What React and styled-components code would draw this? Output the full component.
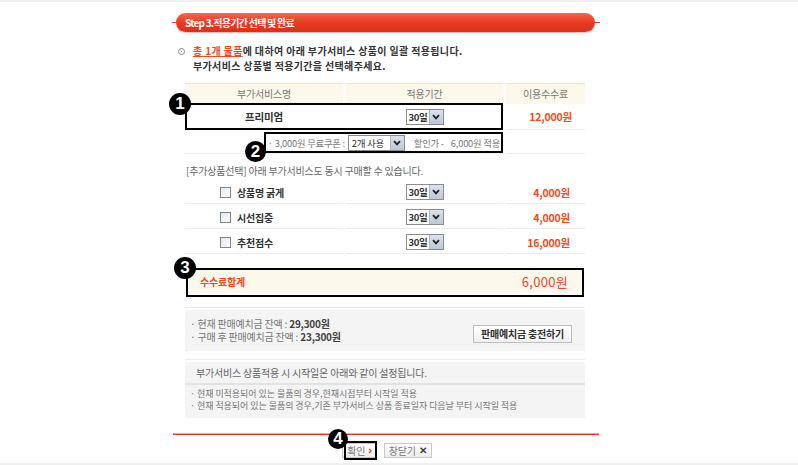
import React from "react";
import styled, { createGlobalStyle } from "styled-components";

const Global = createGlobalStyle`
  html, body { margin: 0; padding: 0; background: #fff; }
  body {
    font-family: "Noto Sans CJK KR", "Noto Sans", sans-serif;
    font-size: 10px;
    letter-spacing: -0.2px;
    color: #666;
  }
`;

const Page = styled.div`
  width: 798px;
  height: 465px;
  box-sizing: border-box;
  border-top: 2px solid #efefef;
  border-bottom: 2px solid #efefef;
  overflow: hidden;
`;

const Column = styled.div`
  position: relative;
  width: 428px;
  margin-left: 172px;
  padding-top: 11px;
`;

const StepBar = styled.div`
  position: relative;
  height: 19px;
  display: flex;
  padding: 0 5px 0 4px;
  &::before {
    content: "";
    position: absolute;
    left: 0;
    right: 0;
    top: 9px;
    height: 1px;
    background: #e2442a;
  }
`;

const StepPill = styled.div`
  position: relative;
  flex: 1;
  border-radius: 10px;
  background: linear-gradient(#f5674d, #e83b22 50%, #dc3018);
  box-shadow: 0 1px 0 #f7c0b0;
  color: #fff;
  font-weight: 700;
  font-size: 10px;
  letter-spacing: -0.75px;
  line-height: 19px;
  padding-left: 9px;
`;

const Intro = styled.div`
  margin-top: 11px;
  display: flex;
  align-items: flex-start;
  font-weight: 700;
  color: #333;
  line-height: 15px;
  font-size: 10px;
  letter-spacing: 0.35px;
`;

const RingBullet = styled.span`
  width: 5px;
  height: 5px;
  margin: 5px 8px 0 6px;
  border: 1px solid #888;
  border-radius: 50%;
  display: flex;
  align-items: center;
  justify-content: center;
  &::after {
    content: "";
    width: 1px;
    height: 1px;
    background: #888;
  }
`;

const Emph = styled.span`
  color: #f04a1a;
  text-decoration: underline;
`;

const Content = styled.div`
  margin-left: 13px;
  width: 400px;
`;

const Row = styled.div`
  display: grid;
  grid-template-columns: 158px 157px 79px;
  column-gap: 3px;
  margin-top: ${(p) => p.$gap || 0}px;
`;

const HeadCell = styled.div`
  height: 20px;
  line-height: 20px;
  background: #fcf8ea;
  border-top: 1px solid #f0e5c6;
  text-align: center;
  color: #777;
`;

const Cell = styled.div`
  height: ${(p) => p.$h || 23}px;
  box-sizing: border-box;
  border-bottom: 1px solid #ececec;
  display: flex;
  align-items: center;
  justify-content: ${(p) => p.$justify || "center"};
  padding: ${(p) => p.$pad || "0"};
  grid-column: ${(p) => (p.$span ? `span ${p.$span}` : "auto")};
  white-space: nowrap;
`;

const Name = styled.span`
  font-weight: 700;
  color: #333;
  font-size: ${(p) => p.$size || 10}px;
`;

const Price = styled.span`
  font-weight: 700;
  color: #f04a1a;
  font-size: 10.5px;
`;

const SelectBox = styled.span`
  display: inline-flex;
  align-items: stretch;
  height: 16px;
  width: ${(p) => p.$w}px;
  box-sizing: border-box;
  border: 1px solid #8c8c8c;
  background: #fff;
  margin: ${(p) => p.$m || "0"};
`;

const SelectText = styled.span`
  flex: 1;
  min-width: 0;
  overflow: hidden;
  white-space: nowrap;
  padding-left: ${(p) => p.$pl || 2}px;
  line-height: 14px;
  font-size: 9.5px;
  font-weight: ${(p) => (p.$bold ? 700 : 400)};
  letter-spacing: -0.3px;
  color: #333;
  text-align: left;
`;

const ArrowBtn = styled.span`
  flex: none;
  width: 13px;
  background: linear-gradient(#dbe2ee, #bcc7d8);
  border-left: 1px solid #a8b3c4;
  display: flex;
  align-items: center;
  justify-content: center;
`;

const Select = ({ value, w, bold, pl, m }) => (
  <SelectBox $w={w} $m={m}>
    <SelectText $bold={bold} $pl={pl}>{value}</SelectText>
    <ArrowBtn>
      <svg width="8" height="6" viewBox="0 0 8 6">
        <path d="M1 1.2 L4 4.4 L7 1.2" fill="none" stroke="#222" strokeWidth="1.8" />
      </svg>
    </ArrowBtn>
  </SelectBox>
);

const CouponText = styled.span`
  color: #777;
  font-size: 9.3px;
  letter-spacing: -0.2px;
  margin-left: ${(p) => p.$ml || 0}px;
`;

const Note = styled.div`
  margin-top: 9px;
  line-height: 16px;
  padding-left: 1px;
  color: #666;
`;

const Check = styled.span`
  width: 11px;
  height: 11px;
  box-sizing: border-box;
  border: 1px solid #7b8590;
  background: linear-gradient(135deg, #e4e7ea, #fff);
  margin-right: 6px;
`;

const CheckCell = styled(Cell)`
  justify-content: flex-start;
  padding-left: 35px;
`;

const TotalBox = styled.div`
  margin: 15px 4px 0 4px;
  height: 24px;
  background: #fdf8ec;
  display: flex;
  align-items: center;
  justify-content: space-between;
  padding: 0 13px 0 11px;
`;

const TotalLabel = styled.span`
  color: #f04a1a;
  font-weight: 700;
  font-size: 10px;
`;

const TotalValue = styled.span`
  color: #f04a1a;
  font-size: 13px;
  letter-spacing: 0.3px;
`;

const Divider = styled.div`
  height: 1px;
  background: #ececec;
  margin-top: ${(p) => p.$gap}px;
`;

const GrayBox = styled.div`
  background: #f4f4f4;
  margin-top: 2px;
`;

const BalanceBox = styled(GrayBox)`
  height: 41px;
  display: flex;
  align-items: center;
  justify-content: space-between;
  padding: 0 13px 0 5px;
`;

const Lines = styled.div`
  display: flex;
  flex-direction: column;
  line-height: 13px;
  color: #777;
  margin-top: -2px;
`;

const Strong = styled.span`
  font-weight: 700;
  color: #444;
`;

const ChargeButton = styled.span`
  margin-top: 6px;
  height: 18px;
  box-sizing: border-box;
  padding: 0 7px;
  border: 1px solid #bdbdbd;
  background: linear-gradient(#fff, #f0f0f0);
  font-weight: 700;
  color: #333;
  line-height: 16px;
`;

const NoticeBox = styled(GrayBox)`
  height: 56px;
`;

const NoticeHead = styled.div`
  height: 21px;
  line-height: 22px;
  padding-left: 11px;
  border-bottom: 2px solid #e2e2e2;
  color: #666;
`;

const NoticeList = styled.div`
  display: flex;
  flex-direction: column;
  padding: 3px 0 0 5px;
  line-height: 12px;
  font-size: 9px;
  letter-spacing: -0.05px;
  color: #777;
`;

const RedRule = styled.div`
  margin: 15px 1px 0 1px;
  height: 1px;
  border-top: 1px solid #f4a595;
  background: #dc3a1f;
`;

const Buttons = styled.div`
  display: flex;
  justify-content: center;
  gap: 7px;
  margin-top: 8px;
  padding-left: 2px;
`;

const SmallButton = styled.span`
  height: 15px;
  box-sizing: border-box;
  border: 1px solid #c9c9c9;
  background: linear-gradient(#fff, #eee);
  padding: 0 4px;
  line-height: 13px;
  color: #777;
  display: inline-flex;
  align-items: center;
  gap: 3px;
`;

const Mark = styled.span`
  color: ${(p) => p.$color};
  font-weight: 700;
  font-family: "Liberation Sans", sans-serif;
  font-size: ${(p) => p.$size}px;
`;

const Outline = styled.div`
  position: absolute;
  box-sizing: border-box;
  border: 2px solid #000;
  pointer-events: none;
`;

const Badge = styled.div`
  position: absolute;
  width: ${(p) => p.$d}px;
  height: ${(p) => p.$d}px;
  border-radius: 50%;
  background: #000;
  color: #fff;
  font-family: "Liberation Sans", Arial, sans-serif;
  font-weight: 700;
  font-size: 17px;
  display: flex;
  align-items: center;
  justify-content: center;
`;

const extras = [
  { name: "상품명 굵게", price: "4,000원" },
  { name: "시선집중", price: "4,000원" },
  { name: "추천점수", price: "16,000원" },
];

export default function App() {
  return (
    <Page>
      <Global />
      <Column>
        <StepBar>
          <StepPill>Step 3.적용기간 선택 및 완료</StepPill>
        </StepBar>

        <Intro>
          <RingBullet />
          <div>
            <Emph>총 1개 물품</Emph>에 대하여 아래 부가서비스 상품이 일괄 적용됩니다.
            <br />
            부가서비스 상품별 적용기간을 선택해주세요.
          </div>
        </Intro>

        <Content>
          <Row $gap={10}>
            <HeadCell>부가서비스명</HeadCell>
            <HeadCell>적용기간</HeadCell>
            <HeadCell>이용수수료</HeadCell>
          </Row>
          <Row>
            <Cell $h={26}>
              <Name $size={10.5}>프리미엄</Name>
            </Cell>
            <Cell $h={26}>
              <Select value="30일" w={38} bold />
            </Cell>
            <Cell $h={26} $justify="flex-end" $pad="0 13px 0 0">
              <Price>12,000원</Price>
            </Cell>
          </Row>
          <Row $gap={2}>
            <Cell $h={22} $span={2} $justify="flex-end" $pad="0 3px 0 0">
              <CouponText>· 3,000원 무료쿠폰 :</CouponText>
              <Select value="2개 사용" w={57} pl={3} m="0 0 0 3px" />
              <CouponText $ml={9}>할인가 -</CouponText>
              <CouponText $ml={7}>6,000원 적용</CouponText>
            </Cell>
            <Cell $h={22} />
          </Row>

          <Note>[추가상품선택] 아래 부가서비스도 동시 구매할 수 있습니다.</Note>

          {extras.map((e) => (
            <Row key={e.name} $gap={2}>
              <CheckCell $h={23}>
                <Check />
                <Name>{e.name}</Name>
              </CheckCell>
              <Cell $h={23}>
                <Select value="30일" w={38} bold />
              </Cell>
              <Cell $h={23} $justify="flex-end" $pad="0 15px 0 0">
                <Price>{e.price}</Price>
              </Cell>
            </Row>
          ))}

          <TotalBox>
            <TotalLabel>수수료합계</TotalLabel>
            <TotalValue>6,000원</TotalValue>
          </TotalBox>

          <Divider $gap={14} />
          <BalanceBox>
            <Lines>
              <span>
                · 현재 판매예치금 잔액 : <Strong>29,300원</Strong>
              </span>
              <span>
                · 구매 후 판매예치금 잔액 : <Strong>23,300원</Strong>
              </span>
            </Lines>
            <ChargeButton>판매예치금 충전하기</ChargeButton>
          </BalanceBox>

          <Divider $gap={8} />
          <NoticeBox>
            <NoticeHead>부가서비스 상품적용 시 시작일은 아래와 같이 설정됩니다.</NoticeHead>
            <NoticeList>
              <span>· 현재 미적용되어 있는 물품의 경우,현재시점부터 시작일 적용</span>
              <span>· 현재 적용되어 있는 물품의 경우,기존 부가서비스 상품 종료일자 다음날 부터 시작일 적용</span>
            </NoticeList>
          </NoticeBox>
        </Content>

        <RedRule />
        <Buttons>
          <SmallButton>
            확인<Mark $color="#e0301a" $size={11}>›</Mark>
          </SmallButton>
          <SmallButton>
            창닫기<Mark $color="#444" $size={10}>✕</Mark>
          </SmallButton>
        </Buttons>

        <Outline style={{ left: 13, top: 101, width: 318, height: 27 }} />
        <Badge $d={22} style={{ left: -3, top: 91 }}>1</Badge>
        <Outline style={{ left: 92, top: 130, width: 239, height: 21 }} />
        <Badge $d={21} style={{ left: 73, top: 139 }}>2</Badge>
        <Outline style={{ left: 14, top: 266, width: 398, height: 29 }} />
        <Badge $d={22} style={{ left: 2, top: 255 }}>3</Badge>
        <Outline style={{ left: 172, top: 439, width: 33, height: 19 }} />
        <Badge $d={20} style={{ left: 156, top: 427 }}>4</Badge>
      </Column>
    </Page>
  );
}
